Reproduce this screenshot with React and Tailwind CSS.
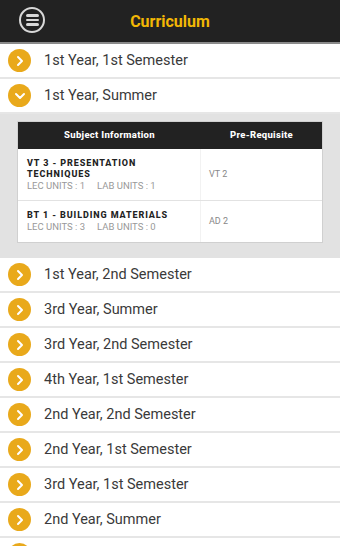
import React from "react";
import { ChevronRight, ChevronDown } from "lucide-react";

const rows = [
  "1st Year, 2nd Semester",
  "3rd Year, Summer",
  "3rd Year, 2nd Semester",
  "4th Year, 1st Semester",
  "2nd Year, 2nd Semester",
  "2nd Year, 1st Semester",
  "3rd Year, 1st Semester",
  "2nd Year, Summer",
  "4th Year, 2nd Semester",
];

const subjects = [
  { name: "VT 3 - PRESENTATION TECHNIQUES", lec: 1, lab: 1, pre: "VT 2" },
  { name: "BT 1 - BUILDING MATERIALS", lec: 3, lab: 0, pre: "AD 2" },
];

const Row = ({ label, open }) => (
  <div className="h-[35px] flex items-center bg-white border-b-2 border-[#e6e6e6] shrink-0">
    <div className="ml-[8px] size-[23px] rounded-full bg-[#e9a91b] flex items-center justify-center">
      {open ? (
        <ChevronDown className="size-[16px] text-white" strokeWidth={3} />
      ) : (
        <ChevronRight className="size-[16px] text-white" strokeWidth={3} />
      )}
    </div>
    <span className="ml-[13px] text-[14.5px] text-[#3a3a3a]">{label}</span>
  </div>
);

export default function App() {
  return (
    <div
      className="w-[340px] h-[546px] overflow-hidden bg-white flex flex-col"
      style={{ fontFamily: "Roboto, 'Liberation Sans', sans-serif" }}
    >
      <div className="h-[44px] bg-[#222222] border-b-2 border-[#8a8a8a] flex items-center relative shrink-0">
        <div className="absolute left-[19px] top-[7px] size-[26px] rounded-full border-2 border-[#d8d8d8] flex flex-col items-center justify-center gap-[2px]">
          <span className="w-[13px] h-[2.5px] rounded-full bg-[#d8d8d8]" />
          <span className="w-[13px] h-[2.5px] rounded-full bg-[#d8d8d8]" />
          <span className="w-[13px] h-[2.5px] rounded-full bg-[#d8d8d8]" />
        </div>
        <div className="flex-1 text-center text-[16px] font-bold text-[#f2b705] pt-[1px]">
          Curriculum
        </div>
      </div>

      <Row label="1st Year, 1st Semester" />
      <Row label="1st Year, Summer" open />

      <div className="bg-[#e2e2e2] pt-[7px] pb-[15px] px-[17px] shrink-0">
        <div className="bg-white border border-[#d0d0d0]">
          <div className="h-[27px] bg-[#222222] flex items-center text-white text-[9.5px] font-extrabold tracking-[0.3px]">
            <div className="w-[183px] text-center">Subject Information</div>
            <div className="flex-1 text-center">Pre-Requisite</div>
          </div>
          {subjects.map((s, i) => (
            <div
              key={s.name}
              className={`flex ${i === 0 ? "h-[52px] border-b border-[#e2e2e2]" : "h-[41px]"}`}
            >
              <div className="w-[183px] pl-[9px] pr-[8px] flex flex-col justify-center border-r border-[#f2f2f2]">
                <div className="text-[9px] font-extrabold text-[#222] leading-[11px] tracking-[0.9px]">
                  {s.name}
                </div>
                <div className="text-[9.5px] text-[#999] leading-[12px] flex gap-[12px]">
                  <span>LEC UNITS : {s.lec}</span>
                  <span>LAB UNITS : {s.lab}</span>
                </div>
              </div>
              <div className="flex-1 pl-[8px] flex items-center text-[9px] text-[#888]">
                {s.pre}
              </div>
            </div>
          ))}
        </div>
      </div>

      {rows.map((r) => (
        <Row key={r} label={r} />
      ))}
    </div>
  );
}
